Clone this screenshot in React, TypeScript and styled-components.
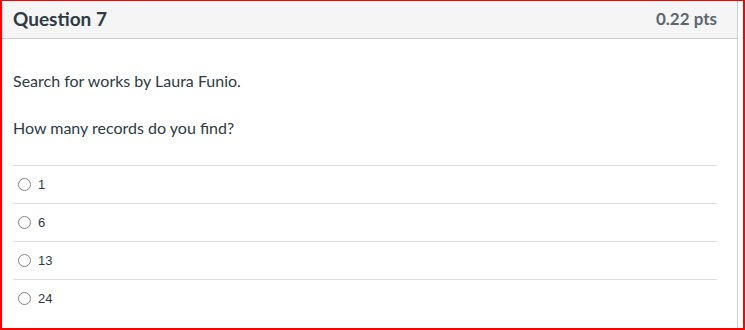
import React from "react";
import styled, { createGlobalStyle } from "styled-components";

const answers = ["1", "6", "13", "24"];

const App = function () {
  return (
    <>
      <GlobalStyle />
      <StyledFrame>
        <StyledCard>
          <StyledHeader>
            <StyledTitle>Question 7</StyledTitle>
            <StyledPoints>0.22 pts</StyledPoints>
          </StyledHeader>
          <StyledBody>
            <StyledText>Search for works by Laura Funio.</StyledText>
            <StyledText>How many records do you find?</StyledText>
            <StyledAnswers>
              {answers.map((a) => (
                <StyledAnswer key={a}>
                  <StyledRadio />
                  <StyledLabel>{a}</StyledLabel>
                </StyledAnswer>
              ))}
            </StyledAnswers>
          </StyledBody>
        </StyledCard>
      </StyledFrame>
    </>
  );
};

export default App;

const GlobalStyle = createGlobalStyle`
  body {
    margin: 0;
    background: #ffffff;
  }
`;

const StyledFrame = styled.div`
  width: 745px;
  height: 330px;
  box-sizing: border-box;
  border: 2px solid #ff0000;
  border-top-width: 1px;
  overflow: hidden;
  background: #ffffff;
`;

const StyledCard = styled.div`
  width: 736px;
  box-sizing: border-box;
  border-right: 1px solid #c7cdd1;
  height: 100%;
  font-family: Lato, "Liberation Sans", sans-serif;
  color: #2d3b45;
`;

const StyledHeader = styled.div`
  height: 38px;
  box-sizing: border-box;
  background: #f5f5f5;
  border-bottom: 1px solid #c7cdd1;
  display: flex;
  align-items: center;
  justify-content: space-between;
  padding: 0 20px 2px 11px;
`;

const StyledTitle = styled.span`
  font-size: 19px;
  font-weight: 700;
`;

const StyledPoints = styled.span`
  font-size: 17px;
  font-weight: 700;
  color: #5b6670;
`;

const StyledBody = styled.div`
  padding: 30px 20px 0 11px;
`;

const StyledText = styled.p`
  margin: 0 0 23px;
  font-size: 16px;
  line-height: 24px;
`;

const StyledAnswers = styled.div`
  margin-top: 25px;
`;

const StyledAnswer = styled.div`
  height: 38px;
  box-sizing: border-box;
  border-top: 1px solid #dddddd;
  display: flex;
  align-items: center;
  padding-left: 5px;
  gap: 7px;
`;

const StyledRadio = styled.span`
  width: 13px;
  height: 13px;
  box-sizing: border-box;
  border: 1px solid #858585;
  border-radius: 50%;
`;

const StyledLabel = styled.span`
  font-family: "Liberation Sans", Arial, sans-serif;
  font-size: 13px;
  color: #2d3b45;
`;
